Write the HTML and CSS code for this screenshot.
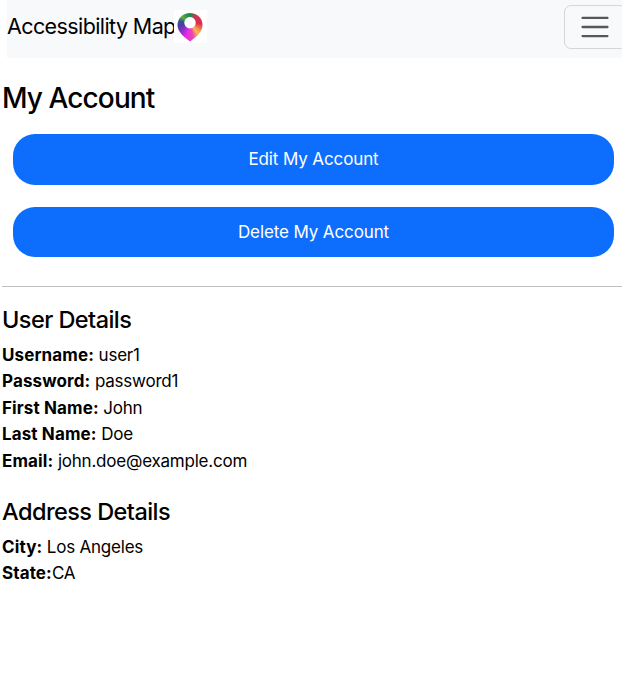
FILE: index.html
```html
<!DOCTYPE html>
<html lang="en">
<head>
<meta charset="utf-8">
<title>My Account</title>
<link rel="stylesheet" href="styles.css">
</head>
<body>
<nav class="navbar">
  <a class="brand"><span class="brand-name">Accessibility Map</span><span class="logo"><span class="pin"></span></span></a>
  <button class="toggler" aria-label="Toggle navigation">
    <svg width="34" height="34" viewBox="0 0 30 30" fill="none" stroke="#55575a" stroke-width="2" stroke-linecap="round" stroke-miterlimit="10"><path d="M4 7h22M4 15h22M4 23h22"/></svg>
  </button>
</nav>
<main class="account">
  <h1>My Account</h1>
  <div class="actions">
    <button class="btn">Edit My Account</button>
    <button class="btn btn-delete">Delete My Account</button>
  </div>
  <hr>
  <section>
    <h2>User Details</h2>
    <p><strong>Username:</strong> user1</p>
    <p><strong>Password:</strong> password1</p>
    <p><strong>First Name:</strong> John</p>
    <p><strong>Last Name:</strong> Doe</p>
    <p><strong>Email:</strong> john.doe@example.com</p>
  </section>
  <section class="address">
    <h2>Address Details</h2>
    <p><strong>City:</strong> Los Angeles</p>
    <p><strong>State:</strong>CA</p>
  </section>
</main>
</body>
</html>
```
FILE: styles.css
```css
* { box-sizing: border-box; }
body {
  margin: 0;
  overflow: hidden;
  background: #fff;
  color: #000;
  font: 400 17px/26.4px Inter, sans-serif;
  letter-spacing: -0.22px;
}
.navbar {
  display: flex;
  justify-content: space-between;
  align-items: flex-start;
  height: 58px;
  margin-left: 7px;
  margin-right: -5px;
  padding-top: 5px;
  background: #f8f9fa;
}
.brand { display: flex; }
.brand-name {
  width: 167px;
  padding-top: 5px;
  font-size: 21.5px;
  line-height: 32px;
  letter-spacing: -0.6px;
  white-space: nowrap;
}
.logo {
  width: 33px;
  height: 33px;
  margin-top: 5px;
  background: #fff;
}
.pin {
  display: block;
  width: 33px;
  height: 33px;
  background:
    radial-gradient(circle at 16px 12.7px, #fff 5.2px, transparent 6.1px),
    conic-gradient(from 0deg at 16px 12.7px, #168c55, #a64b48 30deg, #d92d55 60deg, #d92d55 95deg, #f08a4b 125deg, #f9b84e 145deg, #ed45b5 168deg, #e62be0 195deg, #8d2fd0 222deg, #5138a2 255deg, #295f8c 280deg, #64ad3b 305deg, #299b45 330deg, #168c55);
  clip-path: path("M16 3C9 3 3.5 8 3.5 15C3.5 22 10 27 16 31.5C22 27 28.5 22 28.5 15C28.5 8 23 3 16 3Z");
}
.toggler {
  display: flex;
  align-items: center;
  justify-content: center;
  width: 63px;
  height: 44px;
  padding: 0;
  border: 1px solid #d5d6d7;
  border-radius: 7px;
  background: none;
}
.toggler svg { margin-right: 2px; }
.account { padding-left: 2px; }
h1 {
  margin: 22px 0 18px;
  font-size: 28px;
  line-height: 36px;
  font-weight: 500;
  letter-spacing: -0.9px;
}
.actions {
  display: flex;
  flex-direction: column;
  gap: 22px;
  padding: 0 8px 0 11px;
}
.btn {
  height: 51px;
  padding: 0;
  border: 0;
  border-radius: 22px;
  background: #0d6efd;
  color: #fff;
  font: inherit;
  letter-spacing: -0.12px;
}
.btn-delete { height: 50px; }
hr {
  height: 1px;
  margin: 29px 0 18px;
  border: 0;
  background: #bfbfbf;
}
h2 {
  margin: 0 0 8px;
  font-size: 23.5px;
  line-height: 29px;
  font-weight: 500;
  letter-spacing: -0.55px;
}
p { margin: 0; }
strong { letter-spacing: 0.12px; }
.address { padding-top: 23px; }
```
